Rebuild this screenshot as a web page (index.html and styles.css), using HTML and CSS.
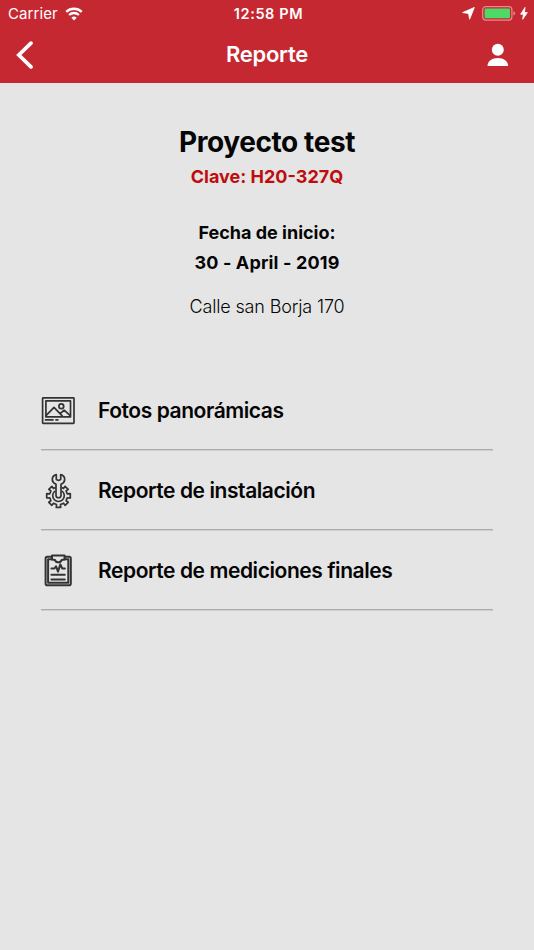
FILE: index.html
```html
<!DOCTYPE html>
<html lang="es">

<head>
    <meta charset="utf-8">
    <meta name="viewport" content="width=device-width, initial-scale=1.0">
    <title>Reporte</title>

    <link rel="stylesheet" href="styles.css">
</head>

<body>
    <header>
        <div class="status-bar">
            <div class="status-left">
                <span class="carrier">Carrier</span>
                <svg class="wifi" width="18" height="14" viewBox="0 0 18 14">
                    <path d="M1.2 4.9a11.2 11.2 0 0 1 15.6 0" />
                    <path d="M4.1 8a7 7 0 0 1 9.8 0" />
                    <path class="dot" d="M9 13.6L6.3 10.7a3.9 3.9 0 0 1 5.4 0z" />
                </svg>
            </div>
            <span class="time">12:58 PM</span>
            <div class="status-right">
                <svg class="solid outlined" width="13" height="13" viewBox="0 0 13 13">
                    <path d="M12.3 .5L7.6 12.2 6.6 6.4.7 5.6z" />
                </svg>
                <svg class="battery" width="34" height="15" viewBox="0 0 34 15">
                    <rect class="case" x=".7" y=".7" width="29.2" height="13.4" rx="3" />
                    <rect class="charge" x="2.6" y="2.5" width="25.4" height="9.8" rx="1.2" />
                    <path class="tip" d="M31.4 5.3q1.7.6 1.7 2.1t-1.7 2.1z" />
                </svg>
                <svg class="solid outlined" width="8" height="13" viewBox="0 0 8 13">
                    <path d="M5 .5L.7 7.2h2.8L2.7 12.3l4.6-6.7H4.4z" />
                </svg>
            </div>
        </div>
        <nav>
            <svg class="back" width="18" height="28" viewBox="0 0 18 28">
                <path d="M15 2.1L2.8 14 15 25.9" />
            </svg>
            <h1>Reporte</h1>
            <svg class="user" width="22" height="24" viewBox="0 0 22 24">
                <circle cx="10.8" cy="6.7" r="6" />
                <path d="M.5 23C.5 18 5 14.9 10.8 14.9S21.1 18 21.1 23z" />
            </svg>
        </nav>
    </header>

    <section class="proyecto">
        <h2>Proyecto test</h2>
        <p class="clave">Clave: H20-327Q</p>
        <p class="fecha">Fecha de inicio:</p>
        <p class="dia">30 - April - 2019</p>
        <p class="calle">Calle san Borja 170</p>
    </section>

    <ul class="menu">
        <li>
            <svg width="36" height="36" viewBox="0 0 36 36">
                <rect x="1.6" y="4.9" width="31.4" height="25.5" rx=".6" />
                <rect x="4.9" y="7.9" width="24.6" height="16" />
                <path d="M5 22.6l8-8.3 8.2 8.6M19.2 20.6l3.9-3.5 6.2 5.6M4.5 26.9h7.5M15 26.9h1.8" />
                <circle cx="20.3" cy="13.3" r="2.4" />
            </svg>
            <span>Fotos panorámicas</span>
        </li>
        <li>
            <svg width="36" height="36" viewBox="0 0 36 36">
                <path d="M15.3 1.6v4.8l2.2 1 2.2-1V1.6c2.7.7 4 2.6 4 4.8 0 2.1-1.5 3.7-3.7 4.8v11.3c0 3-5 3-5 0V11.2c-2.2-1.1-3.7-2.7-3.7-4.8 0-2.2 1.3-4.1 4-4.8z" />
                <g transform="translate(17.5 22.8)">
                    <path d="M3.6-8L5-7.4 6.6-9.5 9.7-6.5 7.6-4.9 8.7-2 11.8-2.2V2.2L8.7 2 7.6 4.9 9.7 6.5 6.6 9.5 5 7.4 2 8.7 2.2 11.6H-2.2L-2 8.7-5 7.4-6.6 9.5-9.7 6.5-7.6 4.9-8.7 2-11.8 2.2V-2.2L-8.7-2-7.6-4.9-9.7-6.5-6.6-9.5-5-7.4-3.6-8" />
                    <path d="M4-4.3a5.8 5.8 0 1 1-8 0" />
                </g>
            </svg>
            <span>Reporte de instalación</span>
        </li>
        <li>
            <svg class="clipboard" width="36" height="36" viewBox="0 0 36 36">
                <path d="M10.6 3.8H6.2q-1.6 0-1.6 1.6v25q0 1.8 1.6 1.8h22q1.6 0 1.6-1.8v-25q0-1.6-1.6-1.6h-4.4" />
                <path d="M11 6.2H7.1v23.6h20.2V6.2h-3.9" />
                <path d="M11 2.5h12.6v4l-3 .5c-.5 3-6.1 3-6.6 0l-3-.5z" />
                <path d="M10.4 15.5h3l1.6-2.3 2 5.4 2.3-7.2 2 4.1h2.6M10.4 21.7h13.4M10.4 26.4h13.4" />
            </svg>
            <span>Reporte de mediciones finales</span>
        </li>
    </ul>
</body>

</html>
```
FILE: styles.css
```css
* {
    box-sizing: border-box;
}

body {
    margin: 0;
    min-height: 950px;
    background-color: #e5e5e5;
    color: #050505;
    font-family: Inter, "Liberation Sans", sans-serif;
}

h1,
h2,
p,
ul {
    margin: 0;
    padding: 0;
}

svg {
    display: block;
    flex-shrink: 0;
}

header {
    height: 83px;
    background-color: #c62832;
    color: white;
}

.status-bar {
    display: grid;
    grid-template-columns: 1fr auto 1fr;
    align-items: center;
    height: 27px;
    padding: 0 6px 0 8px;
    font-size: 15px;
}

.status-left,
.status-right {
    display: flex;
    align-items: center;
    gap: 7px;
}

.carrier {
    letter-spacing: 0.1px;
}

.status-right {
    justify-content: flex-end;
}

.time {
    font-weight: 600;
    font-size: 14.5px;
    letter-spacing: 0.6px;
    margin-left: 1px;
}

.wifi path {
    fill: none;
    stroke: white;
    stroke-width: 2.3;
}

.wifi .dot {
    fill: white;
    stroke: none;
}

.solid,
.user {
    fill: white;
}

.outlined {
    stroke: white;
    stroke-width: 0.9;
    stroke-linejoin: round;
}

.battery {
    margin-right: -3px;
}

.case {
    fill: none;
    stroke: #e58c93;
    stroke-width: 1.2;
}

.charge {
    fill: #4cd964;
}

.tip {
    fill: #e58c93;
}

nav {
    display: grid;
    grid-template-columns: 1fr auto 1fr;
    align-items: center;
    height: 55px;
    padding: 0 16px;
}

.back {
    fill: none;
    stroke: white;
    stroke-width: 3.7;
    stroke-linecap: round;
}

.user {
    justify-self: end;
    margin-right: 9px;
}

h1 {
    padding-bottom: 1px;
    font-size: 22px;
    font-weight: 600;
    letter-spacing: -0.3px;
}

.proyecto {
    height: 287px;
    padding-top: 39px;
    text-align: center;
    font-size: 18px;
    line-height: 30px;
}

h2 {
    font-size: 28px;
    font-weight: 700;
    line-height: 40px;
    letter-spacing: -0.4px;
}

.clave {
    color: #bd0d0d;
    font-weight: 700;
}

.fecha {
    margin-top: 26px;
    font-weight: 700;
}

.dia {
    font-weight: 700;
    letter-spacing: 0.15px;
}

.calle {
    margin-top: 14px;
    font-weight: 300;
    letter-spacing: -0.15px;
}

.menu {
    margin: 0 41px;
    list-style: none;
}

.menu li {
    display: flex;
    align-items: center;
    gap: 21px;
    height: 80px;
    padding-top: 3px;
    border-bottom: 1px solid #adadad;
    box-shadow: 0 1px #cfcfcf;
    font-size: 21px;
    font-weight: 600;
    letter-spacing: -0.43px;
}

.menu span {
    padding-bottom: 2px;
}

.menu svg {
    fill: none;
    stroke: #333;
    stroke-width: 1.7;
    stroke-linejoin: round;
    stroke-linecap: round;
}

.menu .clipboard {
    stroke-width: 2;
}
```
